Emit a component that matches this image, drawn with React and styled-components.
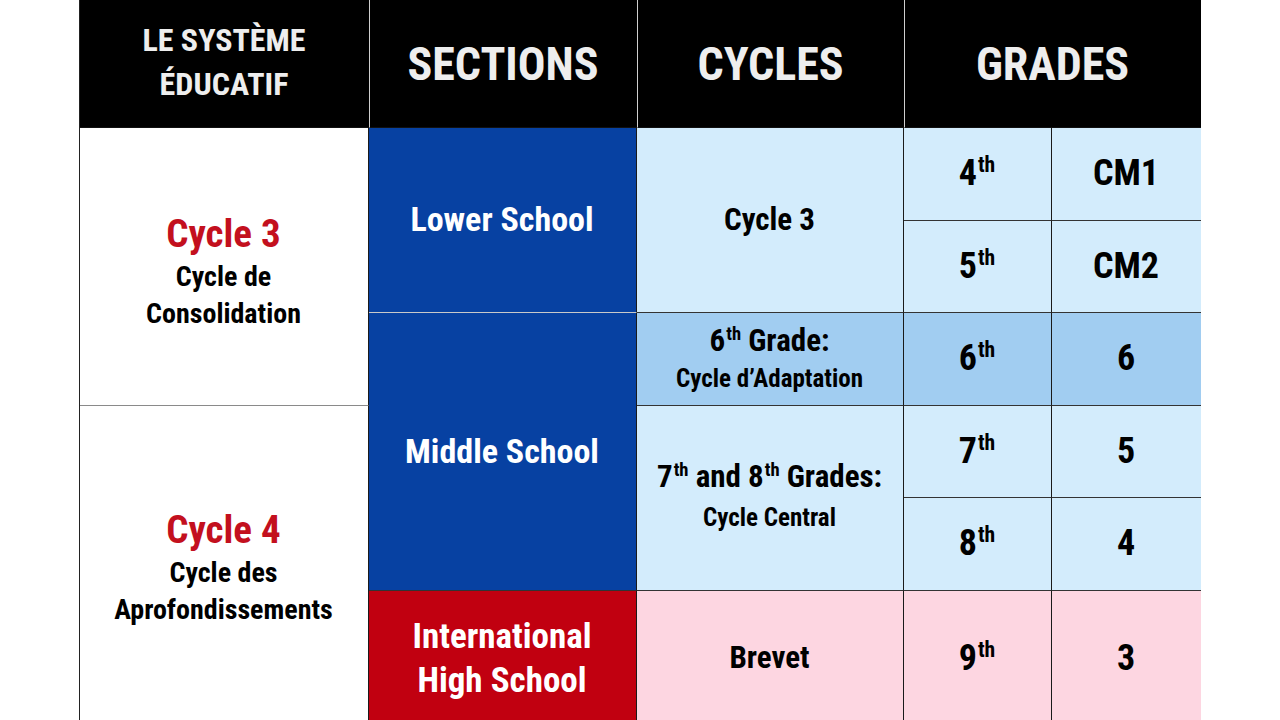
import React from "react";
import styled, { createGlobalStyle } from "styled-components";

const GlobalStyle = createGlobalStyle`
  html, body {
    margin: 0;
    padding: 0;
    background: #fff;
    overflow: hidden;
  }
  body {
    font-family: "Liberation Sans Narrow", "Roboto Condensed", "DejaVu Sans Condensed", "Liberation Sans", sans-serif;
  }
`;

const Page = styled.div`
  width: 1280px;
  height: 720px;
  display: flex;
  justify-content: center;
  overflow: hidden;
`;

const Table = styled.div`
  margin-left: -1px;
  display: grid;
  grid-template-columns: 289px 268px 267px 148px 149px;
  grid-template-rows: 128px 93px 92px 93px 92px 93px 140px;
  border-left: 1px solid #222;
  border-right: 1px solid #555;
  width: 1122px;
  box-sizing: border-box;
`;

const Head = styled.div`
  grid-column: ${(p) => p.$col};
  background: #000;
  color: #eeeeee;
  display: flex;
  align-items: center;
  justify-content: center;
  text-align: center;
  text-transform: uppercase;
  font-weight: 700;
  font-size: ${(p) => (p.$small ? "32px" : "46px")};
  line-height: ${(p) => (p.$small ? "44px" : "1")};
  padding-bottom: ${(p) => (p.$small ? "4px" : "0")};
  border-left: ${(p) => (p.$first ? "none" : "1px solid #cfcfcf")};
  border-bottom: 1px solid #111;
  box-sizing: border-box;
`;

const Cell = styled.div`
  grid-column: ${(p) => p.$col};
  grid-row: ${(p) => p.$row};
  background: ${(p) => p.$bg || "#fff"};
  color: ${(p) => p.$color || "#000"};
  display: flex;
  flex-direction: column;
  align-items: center;
  justify-content: ${(p) => (p.$top ? "flex-start" : "center")};
  padding-top: ${(p) => p.$pt || "0"};
  text-align: center;
  font-weight: 700;
  border-right: ${(p) => (p.$noRight ? "none" : "1px solid #1a1a1a")};
  border-bottom: 1px solid ${(p) => p.$line || "#333"};
  box-sizing: border-box;
`;

const Big = styled.div`
  font-size: ${(p) => p.$size || "36px"};
  line-height: ${(p) => p.$lh || "1.1"};
  color: ${(p) => p.$color || "inherit"};
`;

const Small = styled.div`
  font-size: ${(p) => p.$size || "28px"};
  line-height: ${(p) => p.$lh || "37px"};
`;

const Sup = styled.sup`
  font-size: 0.6em;
  vertical-align: 0;
  position: relative;
  top: -0.6em;
  margin-left: 1px;
`;

const Ord = ({ n }) => (
  <>
    {n}
    <Sup>th</Sup>
  </>
);

const BLUE = "#0741a2";
const RED = "#c10010";
const LIGHT = "#d3ecfc";
const MID = "#a1cdf1";
const PINK = "#fdd6e1";
const TEXT_RED = "#c3101e";

export default function App() {
  return (
    <Page>
      <GlobalStyle />
      <Table>
        <Head $col="1" $small $first>
          Le système
          <br />
          éducatif
        </Head>
        <Head $col="2">Sections</Head>
        <Head $col="3">Cycles</Head>
        <Head $col="4 / span 2">Grades</Head>

        <Cell $col="1" $row="2 / span 3" $line="#8a8a8a" $pt="8px">
          <Big $size="39px" $color={TEXT_RED} $lh="48px">
            Cycle 3
          </Big>
          <Small>Cycle de</Small>
          <Small>Consolidation</Small>
        </Cell>
        <Cell $col="1" $row="5 / span 3" $top $pt="100px">
          <Big $size="39px" $color={TEXT_RED} $lh="48px">
            Cycle 4
          </Big>
          <Small>Cycle des</Small>
          <Small>Aprofondissements</Small>
        </Cell>

        <Cell $col="2" $row="2 / span 2" $bg={BLUE} $color="#fff" $line="#c9c9c9">
          <Big $size="34px">Lower School</Big>
        </Cell>
        <Cell $col="2" $row="4 / span 3" $bg={BLUE} $color="#fff">
          <Big $size="34px">Middle School</Big>
        </Cell>
        <Cell $col="2" $row="7" $bg={RED} $color="#fff" $top $pt="24px">
          <Big $size="35px" $lh="44px">
            International
            <br />
            High School
          </Big>
        </Cell>

        <Cell $col="3" $row="2 / span 2" $bg={LIGHT}>
          <Big $size="31px">Cycle 3</Big>
        </Cell>
        <Cell $col="3" $row="4" $bg={MID}>
          <Big $size="31px" $lh="36px">
            <Ord n="6" /> Grade:
          </Big>
          <Small $size="25px" $lh="32px">
            Cycle d’Adaptation
          </Small>
        </Cell>
        <Cell $col="3" $row="5 / span 2" $bg={LIGHT}>
          <Big $size="31px" $lh="36px">
            <Ord n="7" /> and <Ord n="8" /> Grades:
          </Big>
          <Small $size="25px" $lh="38px">
            Cycle Central
          </Small>
        </Cell>
        <Cell $col="3" $row="7" $bg={PINK} $top $pt="50px">
          <Big $size="31px">Brevet</Big>
        </Cell>

        <Cell $col="4" $row="2" $bg={LIGHT}>
          <Big><Ord n="4" /></Big>
        </Cell>
        <Cell $col="5" $row="2" $bg={LIGHT} $noRight>
          <Big>CM1</Big>
        </Cell>
        <Cell $col="4" $row="3" $bg={LIGHT}>
          <Big><Ord n="5" /></Big>
        </Cell>
        <Cell $col="5" $row="3" $bg={LIGHT} $noRight>
          <Big>CM2</Big>
        </Cell>
        <Cell $col="4" $row="4" $bg={MID}>
          <Big><Ord n="6" /></Big>
        </Cell>
        <Cell $col="5" $row="4" $bg={MID} $noRight>
          <Big>6</Big>
        </Cell>
        <Cell $col="4" $row="5" $bg={LIGHT}>
          <Big><Ord n="7" /></Big>
        </Cell>
        <Cell $col="5" $row="5" $bg={LIGHT} $noRight>
          <Big>5</Big>
        </Cell>
        <Cell $col="4" $row="6" $bg={LIGHT}>
          <Big><Ord n="8" /></Big>
        </Cell>
        <Cell $col="5" $row="6" $bg={LIGHT} $noRight>
          <Big>4</Big>
        </Cell>
        <Cell $col="4" $row="7" $bg={PINK} $top $pt="48px">
          <Big><Ord n="9" /></Big>
        </Cell>
        <Cell $col="5" $row="7" $bg={PINK} $noRight $top $pt="48px">
          <Big>3</Big>
        </Cell>
      </Table>
    </Page>
  );
}
